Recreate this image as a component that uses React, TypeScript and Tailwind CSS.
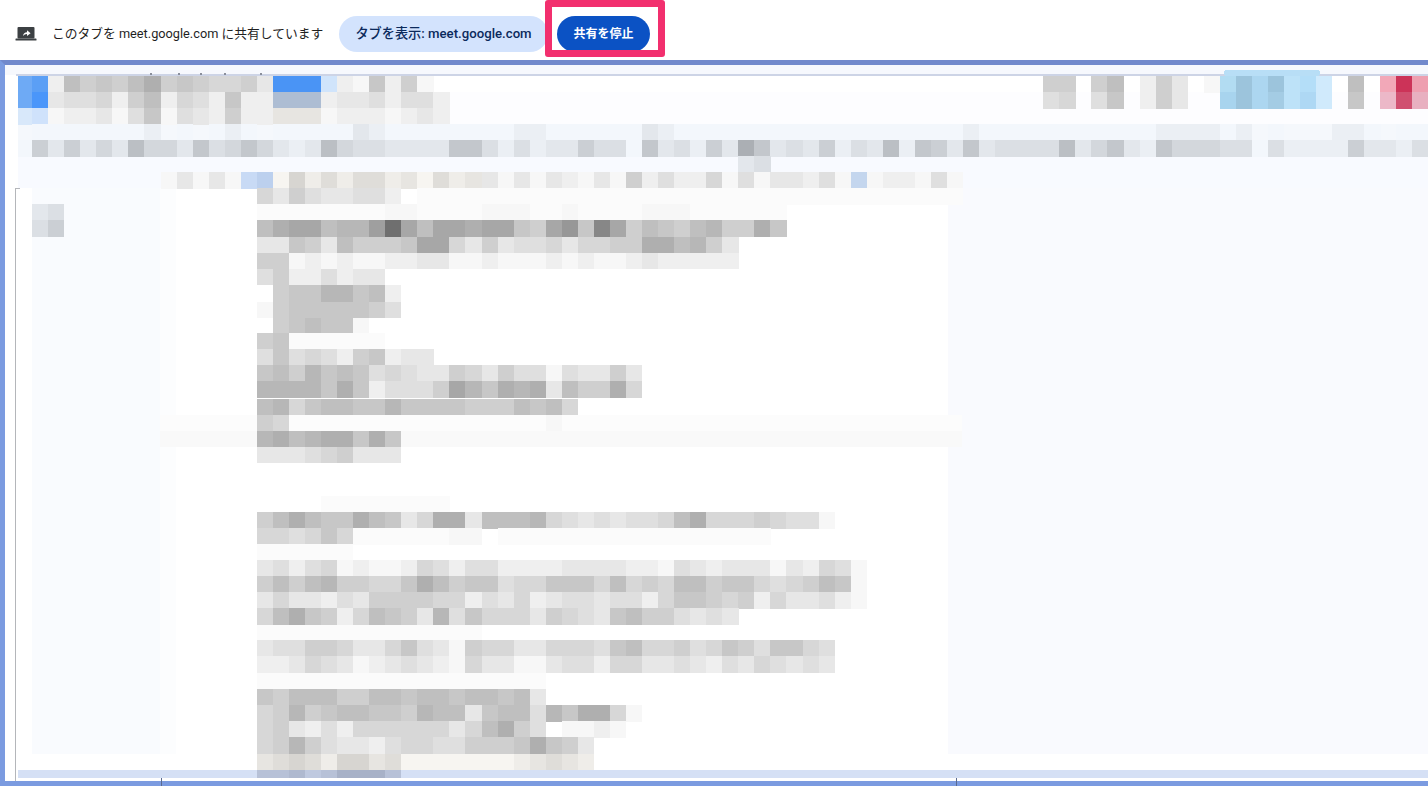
const PALETTE: Record<string, string> = {
  A: "#6eaaf5", B: "#5b9ff5", C: "#4a94f5", D: "#d0e4fb", E: "#adbdd3", F: "#4a96fa", G: "#d8e8fa", H: "#cfe2fb",
  I: "#c8daf5", J: "#bcd0ee", K: "#c4d6ee", L: "#b2dcf2", M: "#9cc4dc", N: "#acd6f0", O: "#bde2f8", P: "#b4def8",
  Q: "#d0eafc", R: "#f2a8b8", S: "#cc3358", T: "#ee9fb0", U: "#a8d4ee", V: "#a4cce4", W: "#aed8f4", X: "#ecb8c8",
  Y: "#d05070", Z: "#e8b0c0",
};

type Tint = "n" | "c" | "w" | "b";
type Row = [number, number, string, Tint?, number?];

const ROWS: Row[] = [
  [76, 1, "AB2 8676 8a67 6556 3 CCC D 2 1 7 2 6 1"],
  [76, 65, "66 0 68 0 263 0 1 LMNMOPQ 0 8 0 RST"],
  [92, 1, "AF3 4452 6825 4272 2 EEE 2 3 3 4 2 4 4 2"],
  [92, 65, "45 0 47 0 263 0 0 UMNVOWQ 0 7 0 XYZ"],
  [108, 1, "GH1 2231 4714 3262 2", "n"],
  [108, 17, "333", "w"],
  [108, 20, "1222 1232"],
  [124, 2, "1111 1112 0101 2101 1111 3211 1111 1122 1111 1132 1111 1111 1111 1111 1111 1111 0222", "c"],
  [124, 60, "2111 1111 1111 2222 1201 0002 2101 11", "c"],
  [140, 1, "1636 3538 5537 4575 3238 5443 3337 7", "c"],
  [140, 30, "4242 3364 4173 4263 a734 3624 3827 6373", "c"],
  [140, 60, "7344 4483 5732 7555 4414 2222 6332 44 1", "c"],
  [156, 46, "34", "c"],
  [172, 10, "1 3 1 3 1 I J", "n"],
  [172, 17, "1 5 2 4 2 4 4 2 3 1 4 2 3", "w"],
  [172, 30, "3 1 3 1 3 2 1 3 1 6 2 4 2 2 5 1 4 1 3 3 2 4 1 K 1 2 2 1 4 1", "n"],
  [188, 16, "5 3 6 4 3 3 4 4 2 0 . . . . . . . . . . . . . . . . . . . . . . . . . . . . . . . . . ."],
  [204, 2, "34", "c"],
  [204, 16, ". . . . . . . . 1 1 . . . . 1 1 1 . . 1 . . . . 1 1 1 . . . . . ."],
  [220, 2, "46", "c"],
  [220, 16, "8abb 899c ib8b babb 76bd 7fb6 8 7 6 8 9 6 6 a 7"],
  [236.5, 16, "3376 3866 67bb 5363 4453 5566 aa89 63"],
  [252.5, 16, "6612 1211 2233 1121 1121 2112 3222 22"],
  [268.5, 16, "4622 4233"],
  [285, 17, "6 7 7 9 9 7 8 2"],
  [301.5, 16, "1677 7776 4"],
  [317.5, 17, "6 7 8 7 7 1"],
  [333, 16, "67 . . . . . ."],
  [349, 16, "47 4 5 4 2 6 7 2 3 3"],
  [365, 16, "7 8 6 9 7 8 7 4 5 4 3 3 6 5 3 6 4 4 1 4 3 3 6 3"],
  [381, 16, "9 9 9 9 7 a 7 2 4 4 4 6 b 9 7 a 9 a 3 8 6 6 a 5"],
  [398.5, 16, "8 9 5 7 8 8 7 7 9 7 7 7 7 6 6 6 8 7 8 5"],
  [414.5, 16, "6 5 0 0 0 0 0 0 0 0 0 0 0 0 0 0 0 0 1"],
  [430.5, 16, "9 a 8 9 a a 7 a 7"],
  [446.5, 16, "3 3 3 4 5 6 3 3 3"],
  [496, 20, ". . . . . . . ."],
  [512, 16, "6 8 a 8 7 7 a 8 7 3 5 a a 3 8 8 8 9 5 4 3 4 3 4 4 5 8 a 5 5 5 6 5 4 4 1"],
  [528, 16, "5 5 4 5 7 5 . . . . . . 1 1 0 . . . . . . . . . . . . . . . . ."],
  [544, 16, ". . . . . ."],
  [560, 16, "3 4 2 4 5 1 2 1 1 2 5 4 2 4 4 2 2 2 2 3 3 3 3 2 2 1 4 3 2 3 3 3 1 3 2 5 4 1"],
  [576, 16, "6 8 6 8 9 6 6 5 5 7 a 8 6 7 7 4 5 5 7 7 7 5 8 5 6 5 8 8 6 7 7 5 4 5 6 8 7 1"],
  [592, 16, "3 5 3 3 2 4 3 6 6 6 6 5 5 2 4 3 5 2 3 4 4 3 4 4 2 5 7 7 6 5 6 2 5 3 3 4 2 1"],
  [608, 16, "5 8 a 7 6 2 5 8 7 6 3 9 4 7 5 5 5 3 6 5 4 3 7 8 6 6 4 3 4 3"],
  [624.5, 16, ". . . . . . . . . . . . . ."],
  [640, 16, "3 4 4 6 6 5 3 3 5 7 4 3 1 6 5 5 3 3 5 5 5 4 7 8 5 5 6 4 5 7 6 4 7 7 5 4"],
  [656, 16, "2 2 3 5 4 3 1 2 3 4 3 2 1 5 3 3 1 1 3 4 4 2 5 5 3 3 4 3 2 4 3 5 4 3 4 3"],
  [673, 16, ". . . . . . . . . . . . . . . . . ."],
  [689, 16, "7 6 8 8 8 6 6 8 8 7 8 8 7 8 8 7 8 3"],
  [705, 16, "5 6 9 6 7 8 8 7 7 6 9 8 8 3 7 8 8 4 9 7 a a 5 1"],
  [721, 16, "5 6 3 2 4 2 5 5 5 5 5 5 3 5 8 a 6 4 0 1 1 2 1"],
  [737, 16, "5 6 9 6 4 3 3 2 4 5 5 4 4 6 6 6 7 a 7 6 3"],
  [754, 16, "3 4 5 4 2 5 5 3", "w", 16],
  [754, 24, "4 1 1 1 1 1 1 1 2 3 4 3 2", "w", 16],
  [770, 16, "7 7 8 6 7 9 9 9 7", "b", 8],
];

function cellColor(ch: string, tint: Tint): string {
  if (PALETTE[ch]) return PALETTE[ch];
  const g = ch === "." ? 251 : 255 - 8 * parseInt(ch, 36);
  if (tint === "c") return `rgb(${g - 4},${g},${Math.min(g + 5, 255)})`;
  if (tint === "w") return `rgb(${g},${g - 2},${g - 6})`;
  if (tint === "b") return `rgb(${g - 16},${g - 6},${Math.min(g + 16, 255)})`;
  return `rgb(${g},${g},${g})`;
}

function Mosaic() {
  const cells: React.ReactNode[] = [];
  ROWS.forEach(([y, start, text, tint = "n", h = 16.5], ri) => {
    text
      .replace(/\s/g, "")
      .split("")
      .forEach((ch, i) => {
        if (ch === "0") return;
        const x0 = Math.max((start + i) * 16.05, 18);
        const x1 = (start + i + 1) * 16.05 + 0.2;
        cells.push(<rect key={`${ri}-${i}`} x={x0} y={y} width={x1 - x0} height={h} fill={cellColor(ch, tint)} />);
      });
  });
  return (
    <svg viewBox="5 65 1423 716" className="block h-full w-full" shapeRendering="crispEdges">
      <rect x="5" y="65" width="1423" height="716" fill="#ffffff" />
      <rect x="5" y="65" width="1423" height="10" fill="#f6f8fd" />
      <rect x="16" y="74" width="1412" height="2" fill="#cdd4e6" />
      <rect x="1224" y="70" width="96" height="6" rx="3" fill="#b8def6" />
      <rect x="150" y="73" width="2" height="2" fill="#8a8f9c" />
      <rect x="178" y="73" width="2" height="2" fill="#8a8f9c" />
      <rect x="200" y="73" width="2" height="2" fill="#8a8f9c" />
      <rect x="224" y="73" width="2" height="2" fill="#8a8f9c" />
      <rect x="260" y="73" width="2" height="2" fill="#8a8f9c" />
      <rect x="32" y="92" width="1396" height="32" fill="#fdfdff" />
      <rect x="18" y="124" width="1410" height="32" fill="#f5f8fc" />
      <rect x="18" y="156" width="1410" height="32" fill="#f8faff" />
      <rect x="32" y="188" width="128" height="566" fill="#f9fbfe" />
      <rect x="160" y="188" width="16" height="566" fill="#fcfdfe" />
      <rect x="948" y="188" width="480" height="566" fill="#f9fafe" />
      <rect x="160" y="414.5" width="802" height="16" fill="#fcfcfc" />
      <rect x="160" y="430.5" width="802" height="16" fill="#f9f9f9" />
      <rect x="18" y="770" width="1410" height="8" fill="#d5e0f5" />
      {cells}
      <rect x="15" y="188" width="1" height="593" fill="#b4b6ba" />
      <rect x="15" y="188" width="5" height="1" fill="#b4b6ba" />
    </svg>
  );
}

function ShareIcon() {
  return (
    <svg width="22" height="16" viewBox="0 0 22 16" className="shrink-0">
      <rect x="2.5" y="1" width="17" height="11.5" rx="1" fill="#3c4043" />
      <rect x="0.5" y="12.5" width="21" height="2" rx="0.6" fill="#3c4043" />
      <path d="M8 10 C8.2 7.6 9.8 6.3 12 6.2 L12 4.3 L15.6 7.2 L12 10 L12 8 C10.4 8 9 8.7 8 10 Z" fill="#ffffff" />
    </svg>
  );
}

export default function App() {
  return (
    <div className="relative flex h-[786px] w-[1428px] flex-col overflow-hidden bg-white font-['Roboto','Noto_Sans_CJK_JP',sans-serif]">
      <header className="flex h-[60px] shrink-0 items-center pt-[8px] pl-[15px]">
        <ShareIcon />
        <span className="ml-[15px] w-[270px] text-[12.75px] whitespace-nowrap text-[#1f1f1f]">このタブを meet.google.com に共有しています</span>
        <button className="ml-[17px] flex h-[36px] w-[209px] items-center justify-center rounded-full bg-[#d3e3fd] text-[13.2px] font-medium whitespace-nowrap text-[#0b2a5c]">
          タブを表示: meet.google.com
        </button>
        <button className="ml-[9px] flex h-[36px] w-[93px] items-center justify-center rounded-full bg-[#0b52c4] text-[12px] font-bold text-white">
          共有を停止
        </button>
      </header>
      <div className="min-h-0 flex-1 border-t-[5px] border-b-[5px] border-l-[5px] border-t-[#7189cc] border-b-[#7b9be0] border-l-[#7b9be0]">
        <Mosaic />
      </div>
      <div className="absolute top-[778px] left-[161px] h-[8px] w-px bg-[#5a6a90]" />
      <div className="absolute top-[778px] left-[956px] h-[8px] w-px bg-[#5a6a90]" />
      <div className="absolute top-0 left-[545px] h-[57px] w-[120px] rounded-[3px] border-[7px] border-[#f22f6e]" />
    </div>
  );
}
